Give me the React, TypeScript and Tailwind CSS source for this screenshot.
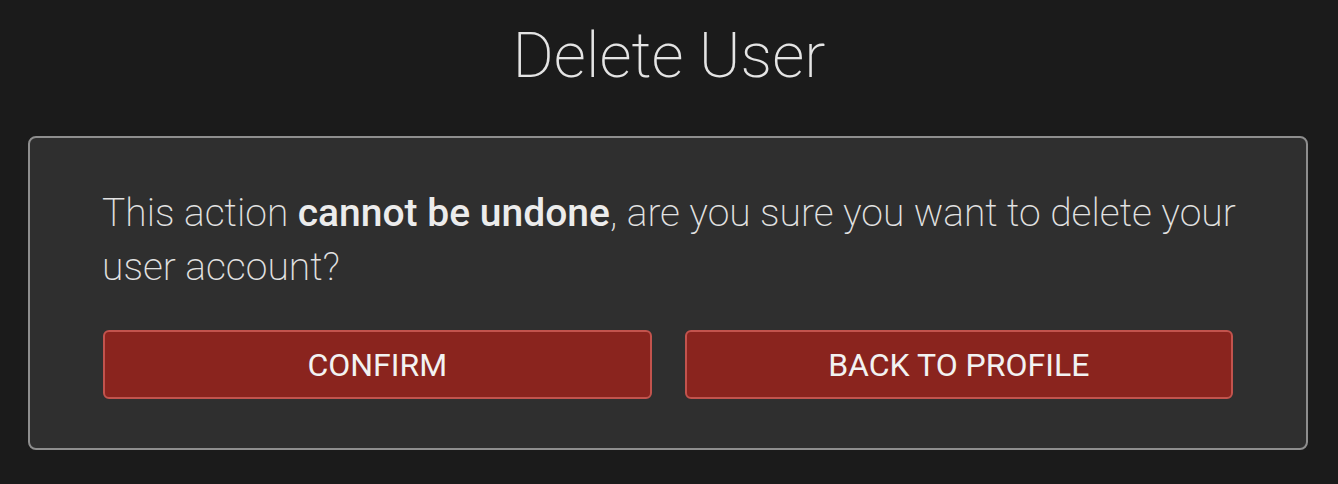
import React from "react";

export default function App() {
  return (
    <div
      className="min-h-[484px] w-full bg-[#1b1b1b] pt-[18px]"
      style={{ fontFamily: "Roboto, 'Liberation Sans', sans-serif" }}
    >
      <h1 className="text-center text-[63px] font-extralight leading-[76px] text-[#e4e4e4]">
        Delete User
      </h1>

      {/* Confirm card */}
      <div className="ml-[28px] mt-[42px] w-[1280px] rounded-lg border-2 border-[#8e8e8e] bg-[#2f2f2f] px-[73px] pt-[48px] pb-[49px]">
        <p className="-ml-px -mr-[8px] text-[39px] font-extralight leading-[54px] text-[#e2e2e2]">
          This action <span className="font-medium text-[#ececec]">cannot be undone</span>, are you sure you
          want to delete your user account?
        </p>
        <div className="mt-[36px] grid grid-cols-2 gap-[33px]">
          <button
            type="button"
            className="h-[69px] rounded-md border-2 border-[#c2534d] bg-[#8a241e] text-[32px] font-normal text-[#f2f2f2]"
          >
            CONFIRM
          </button>
          <button
            type="button"
            className="h-[69px] rounded-md border-2 border-[#c2534d] bg-[#8a241e] text-[32px] font-normal text-[#f2f2f2]"
          >
            BACK TO PROFILE
          </button>
        </div>
      </div>
    </div>
  );
}
